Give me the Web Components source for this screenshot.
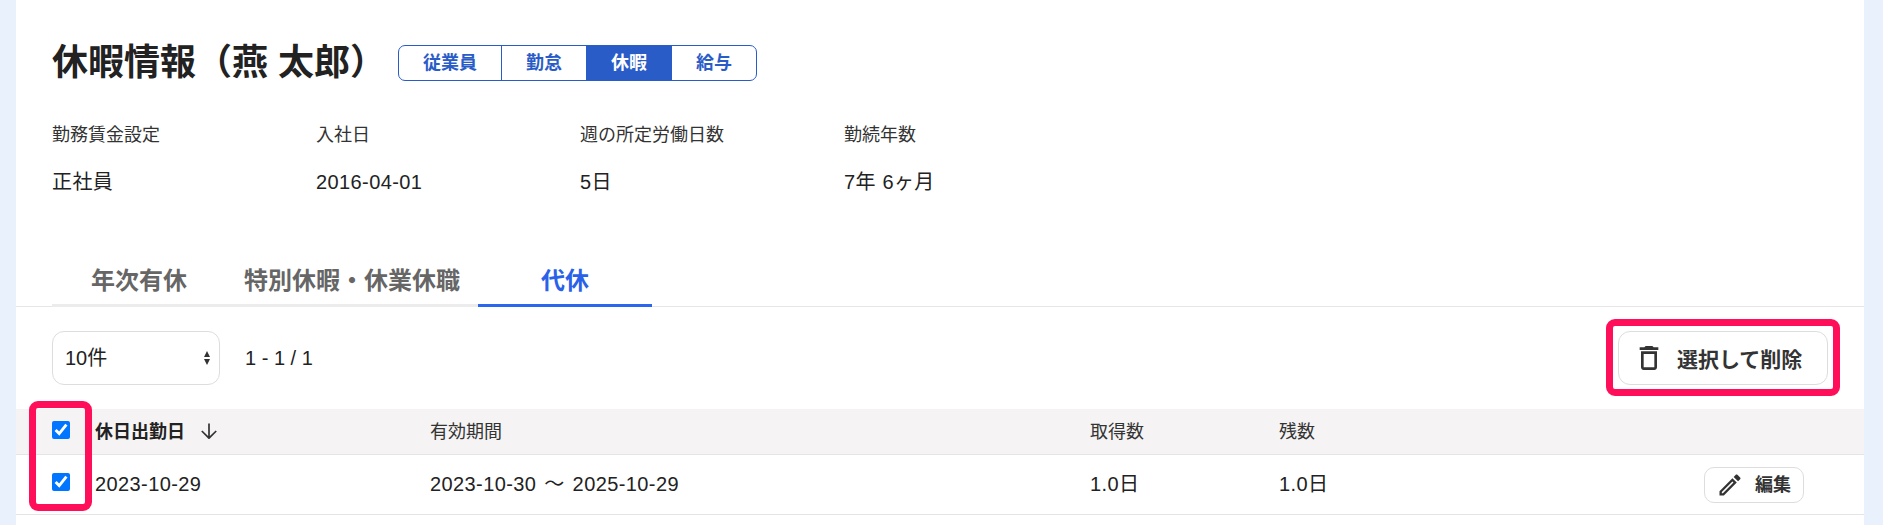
<!DOCTYPE html>
<html lang="ja">
<head>
<meta charset="utf-8">
<title>休暇情報</title>
<style>
html,body{margin:0;padding:0;height:525px;overflow:hidden;background:#e9f1fd}
body{font-family:"Liberation Sans","Noto Sans CJK JP",sans-serif;color:#222;font-size:18px}
</style>
</head>
<body>
<leave-page></leave-page>
<script>
const def=(name,html,init)=>customElements.define(name,class extends HTMLElement{
  constructor(){super();this.attachShadow({mode:"open"}).innerHTML=html;}
  connectedCallback(){init&&init(this);}
});
def("seg-nav",`<style>
:host{display:inline-flex;height:36px;box-sizing:border-box;border:1px solid #2a5cc8;border-radius:7px;overflow:hidden;color:#2a5cc8;font-weight:700;font-size:18px}
a{display:flex;align-items:center;padding:0 24px 4px;border-right:1px solid #2a5cc8}
a:last-child{border-right:0}
a.on{background:#2a5cc8;color:#fff}
</style><a>従業員</a><a>勤怠</a><a class="on">休暇</a><a>給与</a>`);
def("page-title",`<style>
:host{display:flex;align-items:center;gap:12px;height:36px}
h1{margin:0;font-size:36px;font-weight:700;line-height:36px;color:#222;white-space:nowrap}
</style><h1><slot></slot></h1><seg-nav></seg-nav>`);
def("info-item",`<style>
:host{display:flex;flex-direction:column;gap:21px}
.l{font-size:18px;line-height:24px;color:#333}
.v{font-size:20px;line-height:28px;color:#222;letter-spacing:.02em;word-spacing:.5px}
</style><div class="l"></div><div class="v"></div>`,el=>{
  el.shadowRoot.querySelector(".l").textContent=el.getAttribute("label");
  el.shadowRoot.querySelector(".v").textContent=el.getAttribute("value");
});
def("info-grid",`<style>
:host{display:grid;grid-template-columns:repeat(4,264px)}
</style><slot></slot>`);
def("tab-bar",`<style>
:host{display:flex;height:50px;box-sizing:border-box;padding-left:36px;border-bottom:1px solid #e6e6e6;font-size:24px;font-weight:700;color:#666}
a{min-width:174px;box-sizing:border-box;padding:0 18px 5px;height:50px;display:flex;align-items:center;justify-content:center;border-bottom:3px solid #ececec;white-space:nowrap}
a.on{color:#2962e8;border-bottom-color:#2b67ee}
</style><a>年次有休</a><a>特別休暇・休業休職</a><a class="on">代休</a>`);
def("icon-button",`<style>
:host{display:inline-flex;align-items:center;box-sizing:border-box;border:1px solid #ddd;border-radius:var(--r,12px);background:#fff;color:#333;font-weight:700;white-space:nowrap}
</style><slot></slot>`);
def("page-select",`<style>
:host{display:block;position:relative;width:168px;height:54px}
select{appearance:none;width:168px;height:54px;box-sizing:border-box;border:1px solid #ddd;border-radius:12px;background:#fff;padding:0 12px;font:20px "Liberation Sans","Noto Sans CJK JP",sans-serif;color:#222;outline:0}
svg{position:absolute;left:152px;top:20px;width:6px;height:14px;fill:#333}
</style><select><option>10件</option></select><svg viewBox="0 0 6 14"><path d="M3 0l3 6H0zM3 14L0 8h6z"/></svg>`);
def("list-toolbar",`<style>
:host{display:flex;align-items:center;justify-content:space-between;padding:0 36px;height:54px}
.left{display:flex;align-items:center;gap:25px}
.pg{font-size:20px;color:#222}
icon-button{width:210px;height:54px;padding-left:14px;font-size:21px;gap:12px}
svg{width:32px;height:32px;fill:#333;flex:none}
</style><div class="left"><page-select></page-select><span class="pg">1 - 1 / 1</span></div>
<icon-button><svg viewBox="0 0 24 24"><path d="M6 19c0 1.1.9 2 2 2h8c1.1 0 2-.9 2-2V7H6v12zM8 9h8v10H8V9zm7.5-5l-1-1h-5l-1 1H5v2h14V4z"/></svg><span>選択して削除</span></icon-button>`);
const gridCols="79px 335px 660px 189px 200px 1fr";
def("data-table",`<style>
:host{display:block}
.r{display:grid;grid-template-columns:${gridCols};align-items:center;box-sizing:border-box;border-bottom:1px solid #e4e4e4}
.h{height:46px;background:#f5f3f4;font-size:18px;color:#333}
.h>div:not(.c){padding-bottom:4px}
.b{height:60px;font-size:20px;line-height:28px;color:#222;letter-spacing:.02em}
.b>div:not(.c):not(.e){padding-bottom:2px}
.c{display:flex;justify-content:flex-end;padding-right:25px}
input{width:18px;height:18px;margin:0 0 4px 0;accent-color:#0075ff}
.b input{margin-bottom:5px}
.s{display:flex;align-items:center;gap:16px;font-weight:700;color:#222}
.s svg{width:16px;height:16px;fill:none;stroke:#333;stroke-width:1.7;margin-top:3px}
.w{word-spacing:2px}
.e{display:flex;justify-content:flex-end;padding-right:60px}
icon-button{--r:10px;width:100px;height:36px;padding-left:11px;gap:11px;font-size:18px;letter-spacing:0}
.e svg{width:28px;height:28px;fill:#333;flex:none}
</style>
<div class="r h"><div class="c"><input type="checkbox" checked></div><div class="s">休日出勤日<svg viewBox="0 0 16 16"><path d="M8 .5v15M.8 8 8 15.2 15.2 8"/></svg></div><div>有効期間</div><div>取得数</div><div>残数</div><div></div></div>
<div class="r b"><div class="c"><input type="checkbox" checked></div><div>2023-10-29</div><div class="w">2023-10-30 〜 2025-10-29</div><div>1.0日</div><div>1.0日</div><div class="e"><icon-button><svg viewBox="0 0 24 24"><path d="M14.06 9.02l.92.92L5.92 19H5v-.92l9.06-9.06M17.66 3c-.25 0-.51.1-.7.29l-1.83 1.83 3.75 3.75 1.83-1.83c.39-.39.39-1.02 0-1.41l-2.34-2.34c-.2-.2-.45-.29-.71-.29zm-3.6 3.19L3 17.25V21h3.75L17.81 9.94l-3.75-3.75z"/></svg><span>編集</span></icon-button></div></div>`);
def("mark-box",`<style>
:host{position:absolute;box-sizing:border-box;border:7px solid #ff0f5a;border-radius:9px;pointer-events:none}
</style>`);
def("leave-page",`<style>
:host{display:block;position:relative;margin:0 19px 0 16px;height:525px;background:#fff;overflow:hidden}
header{padding:45px 36px 0}
info-grid{margin-top:42px}
tab-bar{margin-top:61px}
list-toolbar{margin-top:24px}
data-table{margin-top:24px}
</style>
<header><page-title>休暇情報（燕 太郎）</page-title>
<info-grid>
<info-item label="勤務賃金設定" value="正社員"></info-item>
<info-item label="入社日" value="2016-04-01"></info-item>
<info-item label="週の所定労働日数" value="5日"></info-item>
<info-item label="勤続年数" value="7年 6ヶ月"></info-item>
</info-grid></header>
<tab-bar></tab-bar>
<list-toolbar></list-toolbar>
<data-table></data-table>
<mark-box style="left:1590px;top:319px;width:234px;height:77px"></mark-box>
<mark-box style="left:13px;top:401px;width:63px;height:110px"></mark-box>`);
</script>
</body>
</html>
